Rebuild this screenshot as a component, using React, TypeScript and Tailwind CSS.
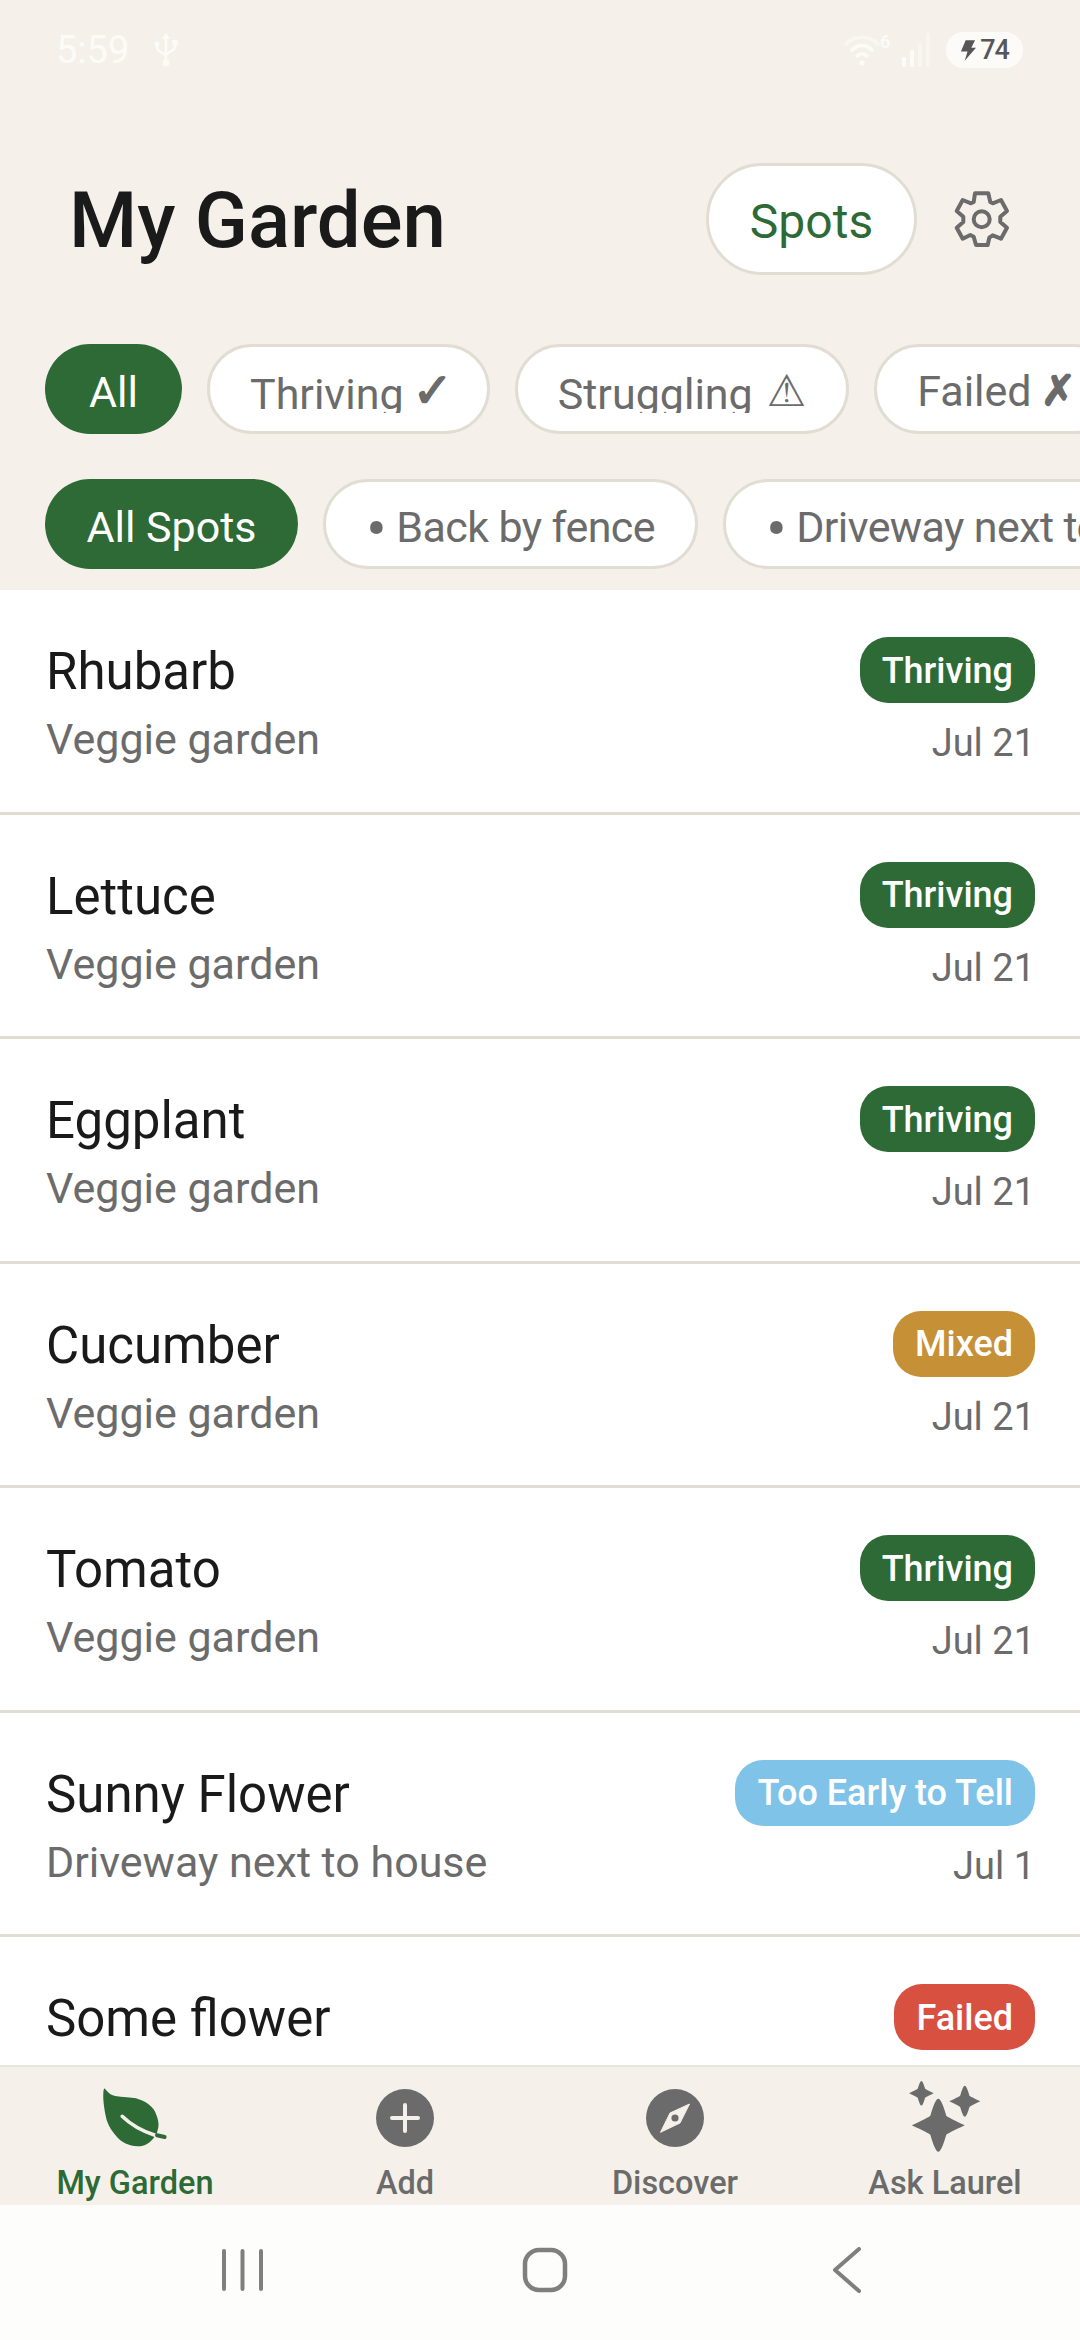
const plants = [
  { name: 'Rhubarb', spot: 'Veggie garden', status: 'Thriving', date: 'Jul 21' },
  { name: 'Lettuce', spot: 'Veggie garden', status: 'Thriving', date: 'Jul 21' },
  { name: 'Eggplant', spot: 'Veggie garden', status: 'Thriving', date: 'Jul 21' },
  { name: 'Cucumber', spot: 'Veggie garden', status: 'Mixed', date: 'Jul 21' },
  { name: 'Tomato', spot: 'Veggie garden', status: 'Thriving', date: 'Jul 21' },
  { name: 'Sunny Flower', spot: 'Driveway next to house', status: 'Too Early to Tell', date: 'Jul 1' },
  { name: 'Some flower', spot: '', status: 'Failed', date: '' },
];

const badgeColor = (status: string) => {
  switch (status) {
    case 'Thriving':
      return 'bg-[#2d6a35]';
    case 'Mixed':
      return 'bg-[#c69036]';
    case 'Too Early to Tell':
      return 'bg-[#80c3e8]';
    default:
      return 'bg-[#d75040]';
  }
};

const star = (cx: number, cy: number, r: number) => {
  const k = r * 0.3;
  return `M${cx} ${cy - r}Q${cx + k * 0.4} ${cy - r} ${cx + k} ${cy - k * 1.2}Q${cx + k * 1.2} ${cy - k} ${cx + r} ${cy}Q${cx + k * 1.2} ${cy + k} ${cx + k} ${cy + k * 1.2}Q${cx + k * 0.4} ${cy + r} ${cx} ${cy + r}Q${cx - k * 0.4} ${cy + r} ${cx - k} ${cy + k * 1.2}Q${cx - k * 1.2} ${cy + k} ${cx - r} ${cy}Q${cx - k * 1.2} ${cy - k} ${cx - k} ${cy - k * 1.2}Q${cx - k * 0.4} ${cy - r} ${cx} ${cy - r}Z`;
};

function StatusBar() {
  return (
    <div className="flex h-[100px] shrink-0 items-center justify-between pl-[56px] pr-[57px] text-[#fdfbf8]">
      <div className="flex items-center gap-[25px]">
        <span className="text-[38px] leading-none">5:59</span>
        <svg width="24" height="34" viewBox="0 0 24 34" fill="none" stroke="currentColor" strokeWidth="2.4" strokeLinecap="round">
          <path d="M12 4V30M3 12v3c0 4 9 5 9 9M21 11v3c0 4-9 5-9 9" />
          <path d="M12 0l4 6H8z" fill="currentColor" stroke="none" />
          <circle cx="12" cy="30" r="3.4" fill="currentColor" stroke="none" />
          <circle cx="3" cy="11" r="2.6" fill="currentColor" stroke="none" />
          <rect x="18.4" y="7" width="5.2" height="5.2" fill="currentColor" stroke="none" />
        </svg>
      </div>
      <div className="flex items-center">
        <div className="relative mr-[10px] h-[36px] w-[48px]">
          <svg width="36" height="36" viewBox="0 0 36 36" fill="none" stroke="currentColor" strokeLinecap="round">
            <path d="M2 12C11 3 25 3 34 12" strokeWidth="3.5" opacity="0.55" />
            <path d="M8 18C14 12 22 12 28 18" strokeWidth="3.5" />
            <path d="M13 24C16 21 20 21 23 24" strokeWidth="3.5" />
            <circle cx="18" cy="31" r="2.6" fill="currentColor" stroke="none" />
          </svg>
          <span className="absolute left-[36px] top-[0px] text-[18px] font-medium leading-[20px]">6</span>
        </div>
        <svg width="34" height="36" viewBox="0 0 34 36" fill="currentColor" className="mr-[10px]">
          <rect x="0" y="25" width="4" height="10" rx="1" />
          <rect x="8" y="18" width="4" height="17" rx="1" />
          <rect x="16" y="11" width="4" height="24" rx="1" opacity="0.5" />
          <rect x="24" y="1" width="4" height="34" rx="1" opacity="0.5" />
        </svg>
        <div className="flex h-[36px] w-[77px] items-center justify-center gap-[4px] rounded-full bg-[#fdfbf8] text-[#55555a]">
          <svg width="16" height="21" viewBox="0 0 17 22" fill="currentColor">
            <path d="M6 0h10l-4 8h5L5 22l3-10H1z" />
          </svg>
          <span className="text-[27px] font-medium leading-none tracking-[-1px]">74</span>
        </div>
      </div>
    </div>
  );
}

function ActivePill({ label, width }: { label: string; width: string }) {
  return (
    <div className={`flex h-[90px] shrink-0 items-center justify-center whitespace-nowrap rounded-full bg-[#2d6a35] pt-[6px] text-[43px] text-white ${width}`}>
      {label}
    </div>
  );
}

// Descenders get cut off in the status chips, same as on the device
function StatusPill({ label, clip, children }: { label: string; clip?: boolean; children: React.ReactNode }) {
  return (
    <div className="flex h-[90px] shrink-0 items-center whitespace-nowrap rounded-full border-[3px] border-[#e2ddd2] bg-white px-[40px] pt-[4px] text-[43px] text-[#6b6b6b]">
      <span className={clip ? 'h-[44px] overflow-hidden leading-[50px]' : 'leading-[50px]'}>{label}</span>
      {children}
    </div>
  );
}

function SpotPill({ label }: { label: string }) {
  return (
    <div className="flex h-[90px] shrink-0 items-center whitespace-nowrap rounded-full border-[3px] border-[#e2ddd2] bg-white px-[40px] pt-[6px] text-[43px] tracking-[-0.6px] text-[#6b6b6b]">
      <span className="mr-[10px] mt-[4px] text-[62px] leading-none">•</span>
      {label}
    </div>
  );
}

function PlantRow({ plant }: { plant: (typeof plants)[number] }) {
  return (
    <div className="flex h-[224.5px] shrink-0 justify-between border-b-[3px] border-[#e2ddd2] pl-[46px] pr-[45px] pt-[47px]">
      <div className="flex flex-col">
        <span className="mt-[2px] text-[51px] leading-[66px] text-[#1a1a1a]">{plant.name}</span>
        <span className="mt-[9px] text-[43px] leading-[50px] text-[#6b6b6b]">{plant.spot}</span>
      </div>
      <div className="flex flex-col items-end">
        <span className={`flex h-[66px] items-center rounded-[28px] px-[22px] pt-[1px] text-[36px] font-medium text-white ${badgeColor(plant.status)}`}>
          {plant.status}
        </span>
        <span className="mt-[15px] text-[38px] leading-[50px] text-[#6b6b6b]">{plant.date}</span>
      </div>
    </div>
  );
}

function NavItem({ label, active, children }: { label: string; active?: boolean; children: React.ReactNode }) {
  return (
    <div className="flex flex-col items-center">
      <div className="flex h-[94px] items-center justify-center">{children}</div>
      <span className={`mt-[2px] text-[32.5px] font-medium leading-[40px] ${active ? 'text-[#2d6a35]' : 'text-[#6b6b6b]'}`}>{label}</span>
    </div>
  );
}

export default function App() {
  return (
    <div className="flex h-[2340px] w-[1080px] flex-col overflow-hidden bg-[#f5f1ea] font-['Roboto','DejaVu_Sans',sans-serif]">
      <StatusBar />

      {/* Header */}
      <div className="mt-[63px] flex h-[112px] shrink-0 items-center justify-between pl-[69px] pr-[69px]">
        <h1 className="pt-[4px] text-[78px] font-medium leading-none text-[#1a1a1a]">My Garden</h1>
        <div className="flex items-center gap-[36px]">
          <div className="flex h-[112px] w-[211px] items-center justify-center rounded-full border-[3px] border-[#e2ddd2] bg-white pt-[5px] text-[48px] text-[#2d6a35]">
            Spots
          </div>
          <svg width="58" height="60" viewBox="-2 -2 58 60" fill="none" stroke="#6b6b6b" strokeWidth="4" strokeLinejoin="round">
            <path d="M20 2.3H33.3L35.3 11L37.7 12.3L46 9L52 20L45.3 25.7V31L52 36.7L46 47.7L37.7 44.3L34.3 46.7L32.7 54H21L18.7 45.7L15.3 44L7.7 47.7L1.7 36.7L8.3 31V25.7L1.7 20L7.7 9L16 12.3L18.7 11Z" />
            <circle cx="26.7" cy="28.3" r="8" />
          </svg>
        </div>
      </div>

      {/* Filters */}
      <div className="mt-[69px] flex shrink-0 gap-[25px] overflow-hidden pl-[45px]">
        <ActivePill label="All" width="w-[137px]" />
        <StatusPill label="Thriving" clip>
          <span className="-mr-[6px] ml-[9px] text-[48px] leading-none [-webkit-text-stroke:1.6px_#6b6b6b]">✓</span>
        </StatusPill>
        <StatusPill label="Struggling" clip>
          <span className="ml-[14px] text-[44px] leading-none">⚠</span>
        </StatusPill>
        <StatusPill label="Failed">
          <span className="ml-[9px] text-[42px] leading-none [-webkit-text-stroke:1.6px_#6b6b6b]">✗</span>
        </StatusPill>
      </div>
      <div className="mt-[45px] flex shrink-0 gap-[25px] overflow-hidden pl-[45px]">
        <ActivePill label="All Spots" width="w-[253px]" />
        <SpotPill label="Back by fence" />
        <SpotPill label="Driveway next to house" />
      </div>

      {/* Plant list */}
      <div className="mt-[21px] flex flex-1 flex-col overflow-hidden bg-white">
        {plants.map((plant) => (
          <PlantRow key={plant.name} plant={plant} />
        ))}
      </div>

      {/* Bottom tabs */}
      <div className="grid h-[140px] shrink-0 grid-cols-4 border-t-[2px] border-[#e8e5de]">
        <NavItem label="My Garden" active>
          <svg width="70" height="64" viewBox="0 0 70 64" className="mt-[6px]">
            <path d="M5 3.7C9 9 12 10.5 17 11.3C27 13 33 12 38 14C48 17 54 23 56 29C58 34 59 38 58.4 42L56.7 49C50 59 44 61.5 37.7 61.3C29 61 21 57 17 52C10 44 7 38 5.5 30C4 22 3 14 3.3 8.7C3.4 5 4 3 5 3.7Z" fill="#2d6a35" />
            <path d="M22.2 31.3C32 41 42 46 55 50.3" fill="none" stroke="#f5f1ea" strokeWidth="3.6" strokeLinecap="round" />
            <path d="M57 50.3L64.6 52" fill="none" stroke="#2d6a35" strokeWidth="4" strokeLinecap="round" />
          </svg>
        </NavItem>
        <NavItem label="Add">
          <svg width="58" height="58" viewBox="0 0 58 58" className="mt-[8px]">
            <circle cx="29" cy="29" r="29" fill="#6b6b6b" />
            <path d="M16 29H42M29 16V42" stroke="#f5f1ea" strokeWidth="4" strokeLinecap="round" />
          </svg>
        </NavItem>
        <NavItem label="Discover">
          <svg width="58" height="58" viewBox="0 0 58 58" className="mt-[8px]">
            <circle cx="29" cy="29" r="29" fill="#6b6b6b" />
            <path d="M43.5 15L34 34L14.5 43.3L24 24Z" fill="#f5f1ea" stroke="#f5f1ea" strokeWidth="1" strokeLinejoin="round" />
            <circle cx="29" cy="29" r="3.6" fill="#6b6b6b" />
          </svg>
        </NavItem>
        <NavItem label="Ask Laurel">
          <svg width="72" height="72" viewBox="0 0 72 72" fill="#6b6b6b" className="mt-[6px]">
            <path d={star(29.3, 44.3, 26.5)} />
            <path d={star(12.4, 12.3, 12.3)} />
            <path d={star(55.8, 20.3, 15.5)} />
          </svg>
        </NavItem>
      </div>

      {/* System navigation */}
      <div className="grid h-[135px] shrink-0 grid-cols-3 items-center bg-[#fdfdfb] pb-[5px] pl-[92px] pr-[82px]">
        <div className="flex justify-center">
          <svg width="44" height="44" viewBox="0 0 44 44" stroke="#7f7f7f" strokeWidth="4" strokeLinecap="round">
            <path d="M3 3V41M21.5 3V41M40 3V41" />
          </svg>
        </div>
        <div className="flex justify-center">
          <svg width="46" height="46" viewBox="0 0 46 46" fill="none" stroke="#7f7f7f" strokeWidth="4.5">
            <rect x="3" y="3" width="40" height="40" rx="14" />
          </svg>
        </div>
        <div className="flex justify-center">
          <svg width="30" height="46" viewBox="0 0 30 46" fill="none" stroke="#7f7f7f" strokeWidth="4" strokeLinecap="round" strokeLinejoin="round">
            <path d="M27 2L3 23L27 44" />
          </svg>
        </div>
      </div>
    </div>
  );
}
